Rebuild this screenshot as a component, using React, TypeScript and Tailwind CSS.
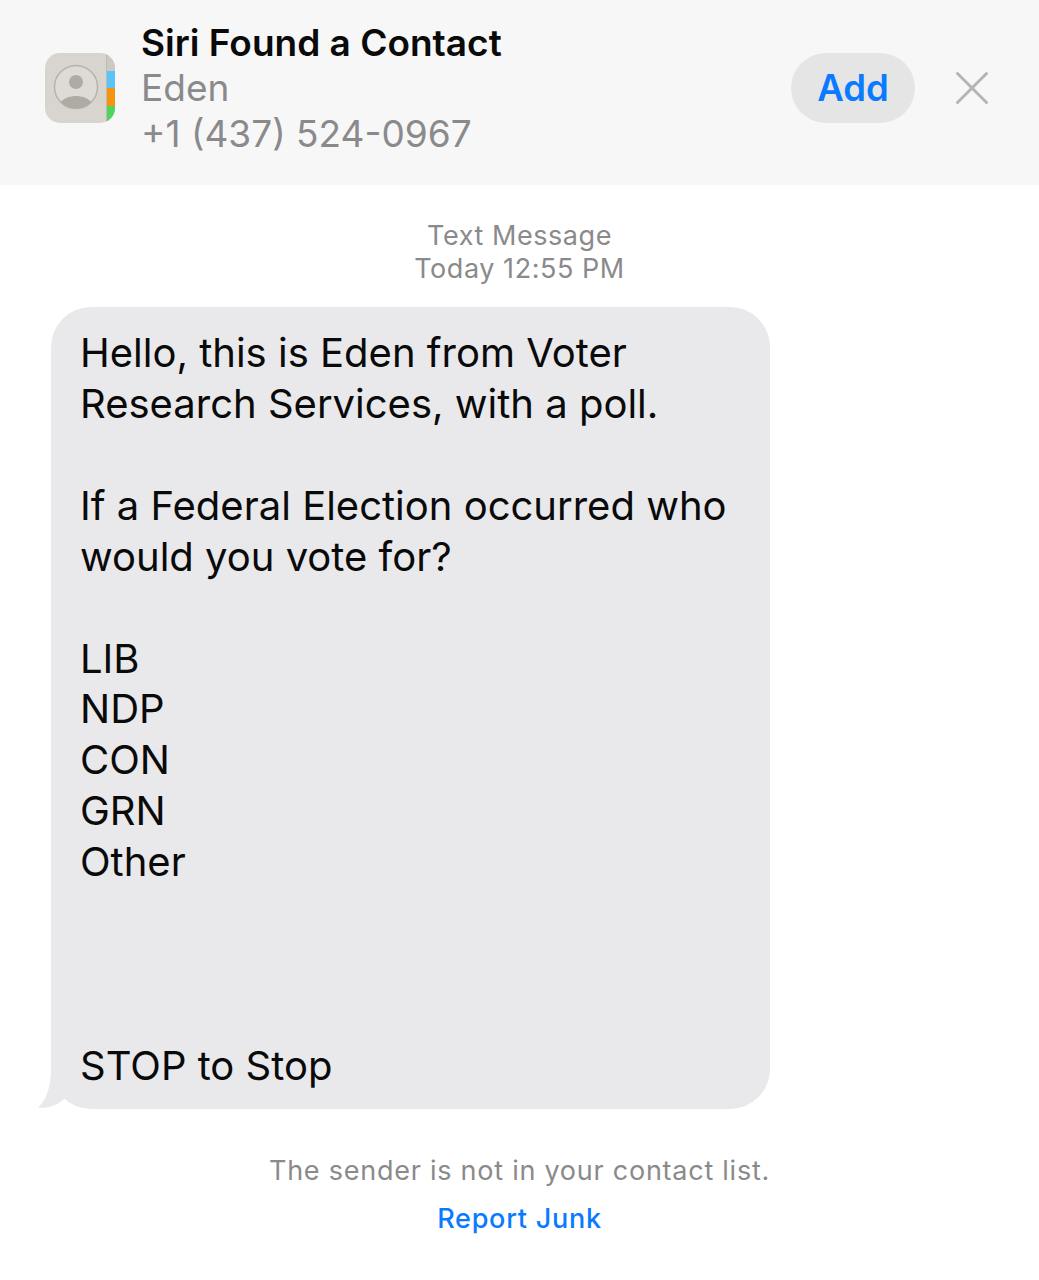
import { X } from 'lucide-react'

const lines = [
  'Hello, this is Eden from Voter',
  'Research Services, with a poll.',
  '',
  'If a Federal Election occurred who',
  'would you vote for?',
  '',
  'LIB',
  'NDP',
  'CON',
  'GRN',
  'Other',
  '',
  '',
  '',
  'STOP to Stop',
]

function ContactsIcon() {
  return (
    <svg width="71" height="71" viewBox="0 0 71 71" className="shrink-0">
      <defs>
        <clipPath id="tile">
          <rect x="0" y="0" width="70" height="70" rx="15" />
        </clipPath>
      </defs>
      <g clipPath="url(#tile)">
        <rect width="71" height="71" fill="#d8d5cf" />
        <rect x="62" y="0" width="9" height="18" fill="#cbc9c4" />
        <rect x="62" y="18" width="9" height="17" fill="#5ac4f8" />
        <rect x="62" y="35" width="9" height="18" fill="#f7940f" />
        <rect x="62" y="53" width="9" height="18" fill="#4fd45e" />
        <rect x="61" y="0" width="1" height="71" fill="#bdbbb5" />
      </g>
      <circle cx="31" cy="34" r="21.5" fill="#dedbd6" stroke="#b5b2ab" strokeWidth="1.4" />
      <circle cx="31" cy="29" r="7" fill="#aeaba4" />
      <path d="M16 49 C19 45 25 43 31 43 C37 43 43 45 46 49 C42 53.5 37 55.5 31 55.5 C25 55.5 20 53.5 16 49 Z" fill="#aeaba4" />
    </svg>
  )
}

export default function App() {
  return (
    <div className="flex min-h-[1280px] w-[1039px] flex-col bg-white font-['Inter','Liberation_Sans',sans-serif]">
      <header className="flex h-[185px] items-center bg-[#f7f7f7] pb-[9px] pl-[45px] pr-[38px]">
        <ContactsIcon />
        <div className="ml-[25px] flex-1 text-[37px] leading-[45.5px]">
          <p className="font-semibold text-[#0a0a0a]">Siri Found a Contact</p>
          <p className="text-[#8a8a8c]">Eden</p>
          <p className="text-[#8a8a8c]">+1 (437) 524-0967</p>
        </div>
        <button className="flex h-[70px] w-[124px] items-center justify-center rounded-full bg-[#e5e5e6] text-[36.5px] font-semibold text-[#0a7aff]">
          Add
        </button>
        <X size={58} strokeWidth={1.2} className="ml-[28px] text-[#b4b4b4]" />
      </header>

      <div className="mt-[34px] text-center text-[27px] leading-[33px] tracking-[0.55px] text-[#8a8a8c]">
        <p>Text Message</p>
        <p>Today 12:55 PM</p>
      </div>

      <div className="relative ml-[51px] mt-[22px] w-[719px] rounded-[40px] bg-[#e9e9eb] pb-[17px] pl-[29px] pr-[30px] pt-[21px] text-[40px] leading-[50.93px] text-[#0a0a0a]">
        {lines.map((line, i) => (
          <p key={i} className="h-[50.93px] whitespace-nowrap">
            {line}
          </p>
        ))}
        <svg width="40" height="40" viewBox="0 0 40 40" className="absolute bottom-0 left-[-13px]">
          <path d="M13 0 C13 18 8 32 0 38.5 C10 40 20 36 27 29 L40 0 Z" fill="#e9e9eb" />
        </svg>
      </div>

      <div className="mt-[38px] text-center text-[27px] leading-[48px] tracking-[0.75px]">
        <p className="text-[#8a8a8c]">The sender is not in your contact list.</p>
        <p className="font-medium text-[#0a7aff]">Report Junk</p>
      </div>
    </div>
  )
}
